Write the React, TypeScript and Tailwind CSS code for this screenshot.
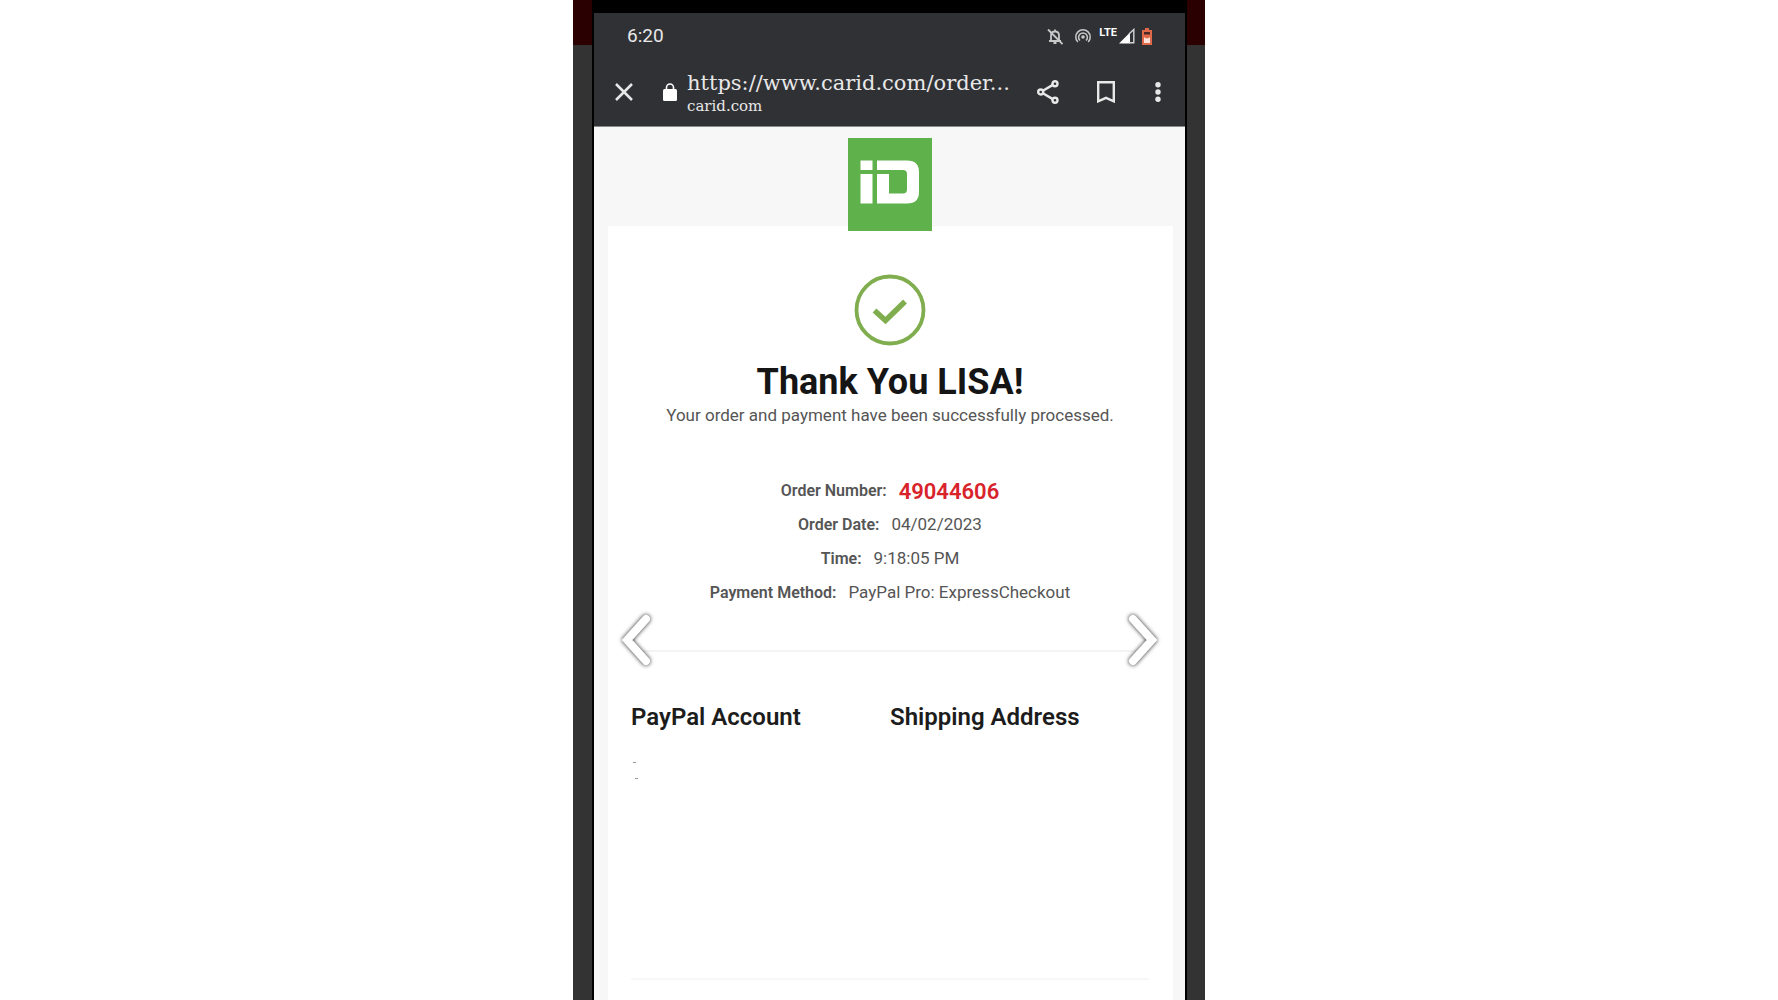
interface OrderRow { label: string; value: string; highlight?: boolean; }

const orderRows: OrderRow[] = [
  { label: 'Order Number:', value: '49044606', highlight: true },
  { label: 'Order Date:', value: '04/02/2023' },
  { label: 'Time:', value: '9:18:05 PM' },
  { label: 'Payment Method:', value: 'PayPal Pro: ExpressCheckout' },
];

function StatusIcons() {
  return (
    <div className="flex items-center text-[#c8c8c9]">
      <svg viewBox="0 0 16 17" className="w-4 h-[17px] mr-3" fill="none" stroke="currentColor" strokeWidth="1.8">
        <path d="M4 13V7.5C4 5 5.800 3.500 8 3.500S12 5 12 7.500V13M2 13h12M8 1.500v2" />
        <path d="M1 1.500 15.500 16" />
        <path d="M6.500 15h3" strokeWidth="2" />
      </svg>
      <svg viewBox="0 0 16 16" className="size-4 mr-2" fill="none" stroke="currentColor" strokeWidth="1.500">
        <path d="M2.800 14A7.200 7.200 0 1 1 13.200 14" />
        <path d="M5 12.500A4.400 4.400 0 1 1 11 12.500" />
        <circle cx="8" cy="9" r="1.800" fill="currentColor" stroke="none" />
      </svg>
      <span className="text-[11px] leading-3 font-bold text-white mb-1.5">LTE</span>
      <svg viewBox="0 0 16 16" className="size-4 ml-0.5 mr-1.5">
        <path d="M0 15.500 11 4.500V15.500Z" fill="#fff" />
        <path d="M10 6 14.800 1.500V14.800H10" fill="none" stroke="#d4d4d5" strokeWidth="1.400" />
      </svg>
      <svg viewBox="0 0 12 17" className="w-3 h-[17px]">
        <path d="M4 0h4v2h3v15H1V2h3z" fill="#e0694a" />
        <path d="M3 4h6v2.500H3z" fill="#4a2a26" />
        <path d="M3 9l1.500 1.200h3L9 9v6H3z" fill="#fbe3db" />
      </svg>
    </div>
  );
}

function BrowserBar() {
  return (
    <header className="bg-[#303134] text-[#e8e8e9] border-b border-[#8a8a8b] pb-1">
      <div className="flex items-center justify-between h-[46px] pl-[33px] pr-8">
        <span className="text-[19px]">6:20</span>
        <StatusIcons />
      </div>
      <div className="flex items-center h-[63px] pt-0.5 pl-[21px] pr-6">
        <button type="button" aria-label="Close" className="mr-[30px]">
          <svg viewBox="0 0 18 18" className="size-[18px]" stroke="currentColor" strokeWidth="2.500">
            <path d="M1 1 17 17M17 1 1 17" />
          </svg>
        </button>
        <svg viewBox="0 0 14 18" className="w-3.5 h-[18px] mr-2.5">
          <rect y="6" width="14" height="12" rx="1.500" fill="#fff" />
          <path d="M3.500 7V4.500a3.500 3.500 0 0 1 7 0V7" fill="none" stroke="#fff" strokeWidth="1.600" />
        </svg>
        <div className="flex-1 min-w-0 pt-1 font-['Roboto_Slab','DejaVu_Serif',serif] whitespace-nowrap">
          <div className="text-[21px] leading-6">https://www.carid.com/order...</div>
          <div className="text-[15px] leading-[22px]">carid.com</div>
        </div>
        <div className="flex items-center">
          <button type="button" aria-label="Share" className="mr-[38px]">
            <svg viewBox="0 0 22 24" className="w-[22px] h-6" fill="none" stroke="currentColor" strokeWidth="2.400">
              <circle cx="18" cy="3.700" r="2.500" />
              <circle cx="3.700" cy="12" r="2.500" />
              <circle cx="18" cy="20.300" r="2.500" />
              <path d="M5.900 10.700 15.800 4.900M5.900 13.300 15.800 19.100" />
            </svg>
          </button>
          <button type="button" aria-label="Bookmark" className="mr-10">
            <svg viewBox="0 0 18 22" className="w-[18px] h-[22px]" fill="none" stroke="currentColor" strokeWidth="2.400">
              <path d="M1.200 1.200H16.800V20.300L9 16.800 1.200 20.300Z" />
            </svg>
          </button>
          <button type="button" aria-label="More">
            <svg viewBox="0 0 6 20" className="w-1.5 h-5" fill="currentColor">
              <circle cx="3" cy="2.700" r="2.700" />
              <circle cx="3" cy="10" r="2.700" />
              <circle cx="3" cy="17.300" r="2.700" />
            </svg>
          </button>
        </div>
      </div>
    </header>
  );
}

function Logo() {
  return (
    <svg viewBox="0 0 84 93" className="w-[84px] h-[93px]" role="img" aria-label="iD">
      <rect width="84" height="93" fill="#5fb14b" />
      <path d="M12.500 22.500h12v9.500h-12zM12.500 36h12v29.500h-12z" fill="#fff" />
      <path d="M29 22.500H59Q71 22.500 71 34V54Q71 65.500 59 65.500H29V36H41V55.500H55Q59 55.500 59 51.500V36Q59 32 55 32H29Z" fill="#fff" />
    </svg>
  );
}

function SlideButton({ label, path, side }: { label: string; path: string; side: string }) {
  return (
    <button type="button" aria-label={label} className={`absolute top-[611px] ${side}`}>
      <svg viewBox="0 0 38 58" className="w-[38px] h-[58px] drop-shadow-[0_0_2px_#222]" fill="none" stroke="#fff" strokeWidth="8" strokeLinecap="round">
        <path d={path} />
      </svg>
    </button>
  );
}

function Rail({ width }: { width: string }) {
  return (
    <div className={`${width} bg-[#333]`}>
      <div className="h-[45px] bg-[#2a0000]" />
    </div>
  );
}

export default function App() {
  return (
    <div className="flex justify-center min-h-screen bg-white font-[Roboto,sans-serif]">
      <div className="relative flex w-full max-w-[632px]">
        <Rail width="w-[19px]" />
        <div className="flex-1 flex flex-col bg-black pt-[13px] px-0.5">
          <BrowserBar />
          <main className="flex-1 flex flex-col bg-[#f7f7f7] pl-3.5 pr-3">
            <div className="flex justify-center h-[99px] pt-[11px] pr-0.5">
              <div className="relative z-10">
                <Logo />
              </div>
            </div>
            <div className="flex-1 bg-white pl-[23px] pr-6 pt-12">
              <section className="flex flex-col items-center text-[#555]">
                <svg viewBox="0 0 72 72" className="size-[72px]" fill="none" stroke="#80ad4e">
                  <circle cx="36" cy="36" r="33.500" strokeWidth="3.800" />
                  <path d="M20.500 36.500 31.500 46.500 51 27.500" strokeWidth="5.500" />
                </svg>
                <h1 className="mt-[15px] text-4xl leading-[42px] font-bold text-[#151515]">Thank You LISA!</h1>
                <p className="text-[17px] leading-6">Your order and payment have been successfully processed.</p>
                <dl className="mt-[47px]">
                  {orderRows.map(row => (
                    <div key={row.label} className="flex items-center justify-center gap-3 h-[34px]">
                      <dt className="text-base font-semibold">{row.label}</dt>
                      <dd className={row.highlight ? 'text-[22px] font-semibold text-[#d8232a]' : 'text-[17px]'}>{row.value}</dd>
                    </div>
                  ))}
                </dl>
              </section>
              <hr className="mt-10 border-t-2 border-[#f4f4f4]" />
              <section className="grid grid-cols-2 pt-[49px] h-[328px] border-b-2 border-[#f7f7f7]">
                <div>
                  <h2 className="text-2xl font-semibold text-[#1c1c1c]">PayPal Account</h2>
                  <svg viewBox="0 0 10 20" className="w-2.5 h-5 mt-7" fill="#999">
                    <rect x="2" y="1" width="3" height="1" />
                    <rect x="4" y="17" width="3" height="1" />
                  </svg>
                </div>
                <h2 className="text-2xl font-semibold text-[#1c1c1c]">Shipping Address</h2>
              </section>
            </div>
          </main>
        </div>
        <Rail width="w-[18px]" />
        <SlideButton label="Previous" path="M30 8 11 29 30 50" side="left-[43px]" />
        <SlideButton label="Next" path="M8 8 27 29 8 50" side="right-[42px]" />
      </div>
    </div>
  );
}
